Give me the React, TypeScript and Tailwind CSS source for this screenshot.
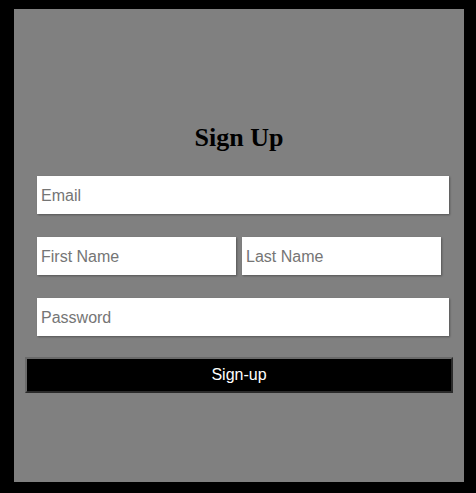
export default function App() {
  const inputCls =
    "h-[38px] bg-white pl-[4px] pr-[4px] pt-[2px] text-[16px] text-black placeholder:text-[#757575] outline-none shadow-[1px_1px_2px_rgba(0,0,0,0.35)] font-['Liberation_Sans',Arial,sans-serif]";

  return (
    <div className="min-h-screen bg-black pl-[14px] pr-[12px] pt-[9px] pb-[11px]">
      <form
        className="flex h-[473px] flex-col bg-[#808080] pt-[114px]"
        onSubmit={(e) => e.preventDefault()}
      >
        <h1 className="h-[30px] text-center text-[26px] font-bold leading-[30px] text-black font-['Liberation_Serif','Times_New_Roman',serif]">
          Sign Up
        </h1>
        <div className="mt-[23px] pl-[23px]">
          <input className={`${inputCls} w-[412px]`} placeholder="Email" />
        </div>
        <div className="mt-[23px] flex gap-[6px] pl-[23px]">
          <input className={`${inputCls} w-[199px]`} placeholder="First Name" />
          <input className={`${inputCls} w-[199px]`} placeholder="Last Name" />
        </div>
        <div className="mt-[23px] pl-[23px]">
          <input
            type="password"
            className={`${inputCls} w-[412px]`}
            placeholder="Password"
          />
        </div>
        <div className="mt-[21px] pl-[11px]">
          <button
            type="submit"
            className="h-[36px] w-[428px] border-2 border-t-[#6a6a6a] border-l-[#6a6a6a] border-b-[#2a2a2a] border-r-[#2a2a2a] bg-black text-[16px] text-white font-['Liberation_Sans',Arial,sans-serif]"
          >
            Sign-up
          </button>
        </div>
      </form>
    </div>
  );
}
